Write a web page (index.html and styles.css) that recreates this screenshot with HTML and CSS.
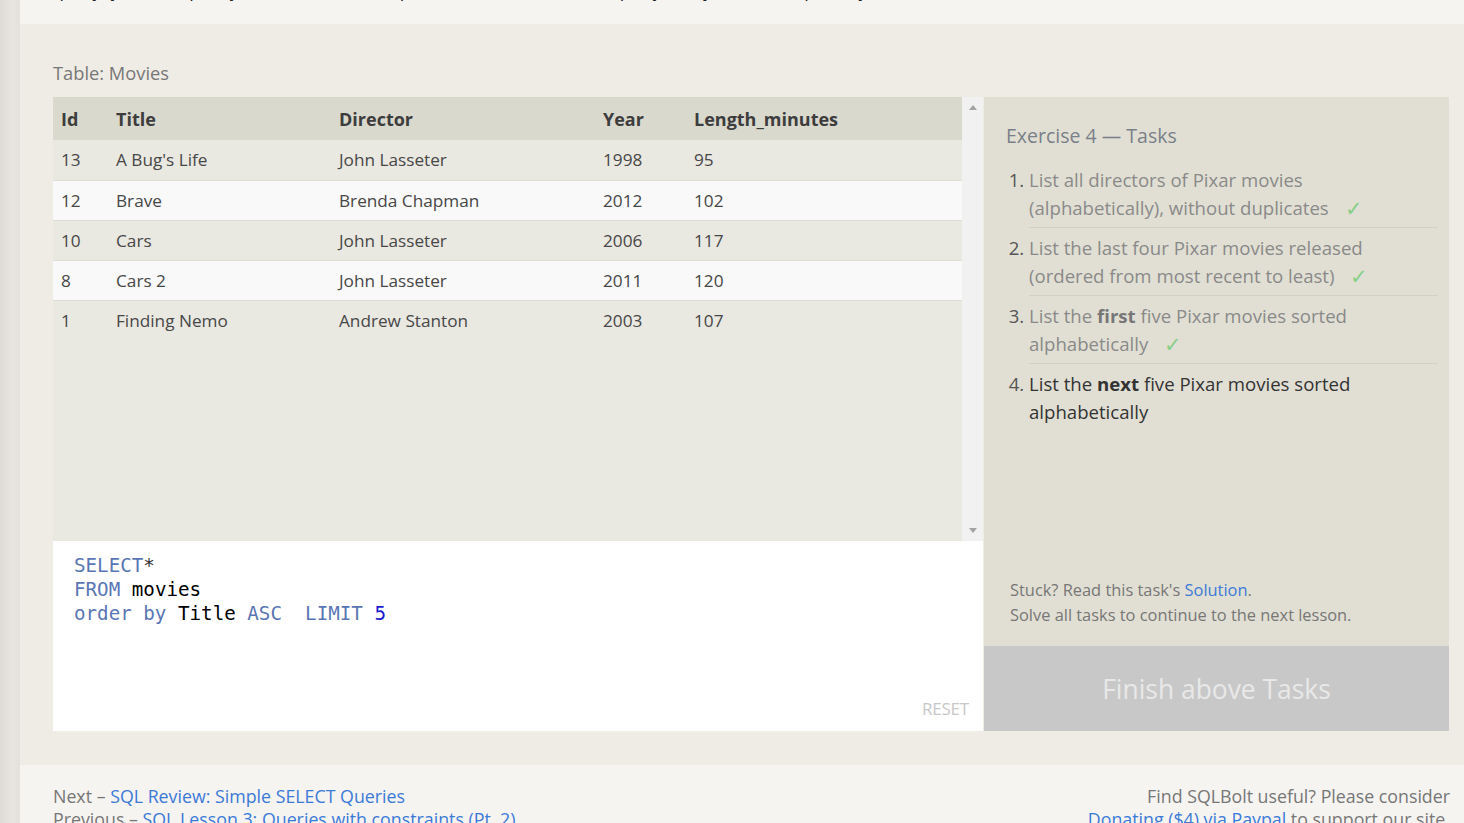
FILE: index.html
```html
<!DOCTYPE html>
<html>
<head>
<meta charset="utf-8">
<title>SQLBolt - Lesson 4</title>
<link rel="stylesheet" href="styles.css">
</head>
<body>
<div class="page">
  <div class="sidebar"></div>
  <div class="main">
    <div class="top-strip"><p class="cut-text">query, you can specify conditions that help us filter the results of a query, but just in a simple way.</p></div>
    <section class="exercise">
      <div class="table-label">Table: Movies</div>
      <div class="panel">
        <div class="left-col">
          <div class="table-wrap">
            <div class="table-scroll">
              <table class="results">
                <colgroup>
                  <col class="c-id"><col class="c-title"><col class="c-dir"><col class="c-year"><col class="c-len">
                </colgroup>
                <thead>
                  <tr><th>Id</th><th>Title</th><th>Director</th><th>Year</th><th>Length_minutes</th></tr>
                </thead>
                <tbody>
                  <tr><td>13</td><td>A Bug's Life</td><td>John Lasseter</td><td>1998</td><td>95</td></tr>
                  <tr><td>12</td><td>Brave</td><td>Brenda Chapman</td><td>2012</td><td>102</td></tr>
                  <tr><td>10</td><td>Cars</td><td>John Lasseter</td><td>2006</td><td>117</td></tr>
                  <tr><td>8</td><td>Cars 2</td><td>John Lasseter</td><td>2011</td><td>120</td></tr>
                  <tr><td>1</td><td>Finding Nemo</td><td>Andrew Stanton</td><td>2003</td><td>107</td></tr>
                </tbody>
              </table>
            </div>
            <div class="scrollbar">
              <span class="arrow up"></span>
              <span class="arrow down"></span>
            </div>
          </div>
          <div class="editor">
            <pre class="code"><span class="kw">SELECT</span><span class="op">*</span>
<span class="kw">FROM</span> <span class="id">movies</span>
<span class="kw">order by</span> <span class="id">Title</span> <span class="kw">ASC</span>  <span class="kw">LIMIT</span> <span class="num">5</span></pre>
            <div class="reset">RESET</div>
          </div>
        </div>
        <div class="tasks">
          <div class="tasks-body">
            <h3 class="tasks-title">Exercise 4 — Tasks</h3>
            <ol class="task-list">
              <li class="done">List all directors of Pixar movies (alphabetically), without duplicates <span class="check">✓</span></li>
              <li class="done">List the last four Pixar movies released (ordered from most recent to least) <span class="check">✓</span></li>
              <li class="done">List the <b>first</b> five Pixar movies sorted alphabetically <span class="check">✓</span></li>
              <li class="current">List the <b>next</b> five Pixar movies sorted alphabetically</li>
            </ol>
            <div class="stuck">
              <div>Stuck? Read this task's <a href="#">Solution</a>.</div>
              <div>Solve all tasks to continue to the next lesson.</div>
            </div>
          </div>
          <div class="finish">Finish above Tasks</div>
        </div>
      </div>
    </section>
    <footer class="footer">
      <div class="nav-links">
        <div>Next – <a href="#">SQL Review: Simple SELECT Queries</a></div>
        <div>Previous – <a href="#">SQL Lesson 3: Queries with constraints (Pt. 2)</a></div>
      </div>
      <div class="donate">
        <div>Find SQLBolt useful? Please consider</div>
        <div><a href="#">Donating ($4) via Paypal</a> to support our site.</div>
      </div>
    </footer>
  </div>
</div>
</body>
</html>
```

FILE: styles.css
```css
* { box-sizing: border-box; }
html, body { margin: 0; padding: 0; }
body {
  font-family: "Open Sans", "Noto Sans", sans-serif;
  color: #444;
  background: #f5f4f0;
  overflow: hidden;
  height: 823px;
}
a { color: #3c7ad8; text-decoration: none; }

.page { display: flex; min-height: 823px; }
.sidebar {
  width: 20px;
  flex: none;
  background: linear-gradient(to right, #dedad6, #e8e5e1 60%, #e4e1dd);
}
.main { flex: 1; display: flex; flex-direction: column; min-width: 0; }

.top-strip {
  height: 24px;
  background: #f5f4f0;
  overflow: hidden;
  padding-left: 33px;
}
.cut-text {
  margin: -20px 0 0 0;
  font-size: 18px;
  line-height: 20px;
  color: #222;
  white-space: nowrap;
}

.exercise {
  background: #efece5;
  padding: 36px 15px 34px 33px;
}
.table-label {
  font-size: 18.3px;
  line-height: 26px;
  color: #777;
  margin-bottom: 11px;
}
.panel { display: flex; height: 634px; }
.left-col { width: 930px; flex: none; display: flex; flex-direction: column; }
.table-wrap { height: 444px; display: flex; background: #e9e8e1; }
.table-scroll { flex: 1; }
.results {
  width: 909px;
  border-collapse: collapse;
  table-layout: fixed;
  font-size: 17.2px;
}
.c-id { width: 55px; }
.c-title { width: 223px; }
.c-dir { width: 264px; }
.c-year { width: 91px; }
.c-len { width: 276px; }
.results th {
  background: #dad9ce;
  text-align: left;
  font-weight: 700;
  color: #3d3d3d;
  height: 43px;
  padding: 0 8px;
  font-size: 18px;
}
.results td {
  height: 40px;
  padding: 0 8px;
  color: #474747;
  border-top: 1px solid #dedcd5;
  white-space: nowrap;
}
.results tbody tr:nth-child(odd) { background: #e9e8e1; }
.results tbody tr:nth-child(even) { background: #f9f9f9; }
.results tbody tr:first-child td { border-top: none; }

.scrollbar {
  width: 21px;
  flex: none;
  background: #f1f1f1;
  display: flex;
  flex-direction: column;
  justify-content: space-between;
  align-items: center;
  padding: 8px 0 8px;
}
.arrow { width: 0; height: 0; border-left: 4px solid transparent; border-right: 4px solid transparent; }
.arrow.up { border-bottom: 5px solid #a3a3a3; }
.arrow.down { border-top: 5px solid #a3a3a3; }

.editor {
  flex: 1;
  background: #fff;
  position: relative;
  padding: 13px 21px;
}
.code {
  margin: 0;
  font-family: "DejaVu Sans Mono", "Liberation Mono", monospace;
  font-size: 19.2px;
  line-height: 24px;
  color: #000;
}
.kw { color: #5a76b4; }
.op { color: #333; }
.id { color: #000; }
.num { color: #1a1ad0; }
.reset {
  position: absolute;
  right: 14px;
  bottom: 11px;
  font-size: 17px;
  color: #c8c8c8;
  letter-spacing: -0.2px;
}

.tasks {
  width: 465px;
  margin-left: 1px;
  flex: none;
  background: #e1dfd3;
  display: flex;
  flex-direction: column;
}
.tasks-body {
  flex: 1;
  padding: 24px 11px 19px 22px;
  display: flex;
  flex-direction: column;
}
.tasks-title {
  margin: 0 0 15px 0;
  font-weight: 400;
  font-size: 19.5px;
  line-height: 30px;
  color: #7a7f89;
}
.task-list {
  margin: 0;
  padding-left: 23px;
  font-size: 18.6px;
  line-height: 28px;
}
.task-list li {
  padding: 0 70px 5px 0;
  margin-bottom: 6px;
  border-bottom: 1px solid #d3d1c5;
}
.task-list li::marker { color: #555; }
.task-list li.done { color: #8a8a8a; }
.task-list li.done b { color: #777; }
.task-list li.current { color: #333; border-bottom: none; }
.task-list b { font-weight: 700; }
.check {
  display: inline-block;
  color: #86cf86;
  margin-left: 12px;
  line-height: 20px;
  transform: scale(1.15);
}
.stuck {
  margin-top: auto;
  padding-left: 4px;
  font-size: 16.4px;
  line-height: 25px;
  color: #777;
}
.finish {
  height: 85px;
  background: #c8c8c8;
  color: #e8e8e8;
  font-size: 26.4px;
  display: flex;
  align-items: center;
  justify-content: center;
}

.footer {
  display: flex;
  justify-content: space-between;
  padding: 20px 14px 0 33px;
  font-size: 17.8px;
  line-height: 23px;
  color: #777;
}
.donate { text-align: right; }
```
